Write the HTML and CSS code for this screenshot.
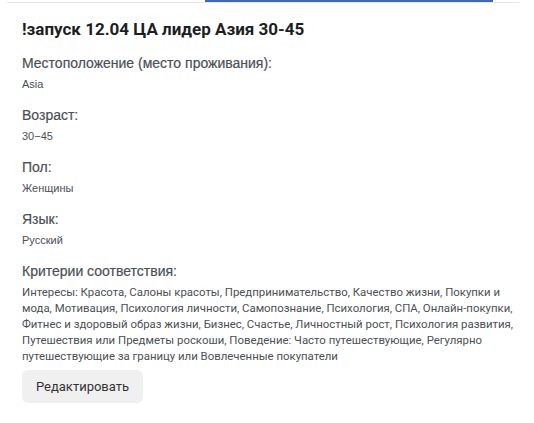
FILE: index.html
```html
<!DOCTYPE html>
<html lang="ru">
<head>
    <meta charset="UTF-8">
    <meta name="viewport" content="width=device-width, initial-scale=1.0">
    <title>Аудитория</title>
    <link rel="stylesheet" href="styles.css">
</head>
<body>
    <div class="card">
        <div class="tabs">
            <div class="tab"></div>
            <div class="tab active"></div>
            <div class="tab rest"></div>
        </div>
        <div class="content">
            <h1 class="title">!запуск 12.04 ЦА лидер Азия 30-45</h1>

            <div class="field">
                <div class="label">Местоположение (место проживания):</div>
                <div class="value">Asia</div>
            </div>
            <div class="field">
                <div class="label">Возраст:</div>
                <div class="value">30−45</div>
            </div>
            <div class="field">
                <div class="label">Пол:</div>
                <div class="value">Женщины</div>
            </div>
            <div class="field">
                <div class="label">Язык:</div>
                <div class="value">Русский</div>
            </div>
            <div class="field last">
                <div class="label">Критерии соответствия:</div>
                <div class="value long">Интересы: Красота, Салоны красоты, Предпринимательство, Качество жизни, Покупки и мода, Мотивация, Психология личности, Самопознание, Психология, СПА, Онлайн-покупки, Фитнес и здоровый образ жизни, Бизнес, Счастье, Личностный рост, Психология развития, Путешествия или Предметы роскоши, Поведение: Часто путешествующие, Регулярно путешествующие за границу или Вовлеченные покупатели</div>
            </div>

            <button class="edit-button">Редактировать</button>
        </div>
    </div>
</body>
</html>
```

FILE: styles.css
```css
body {
    margin: 0;
    background-color: #ffffff;
    font-family: Roboto, "Liberation Sans", Arial, sans-serif;
    color: #444950;
}

.card {
    height: 423px;
    box-sizing: border-box;
}

.tabs {
    display: flex;
    margin: 0 15px 0 7px;
    border-bottom: 1px solid #e6e6e6;
}

.tab {
    height: 2px;
    width: 198px;
}

.tab.active {
    width: 288px;
    background-color: #4267b2;
}

.tab.rest {
    flex: 1;
}

.content {
    padding: 14px 14px 0 22px;
}

.title {
    margin: 0 0 12px 0;
    font-size: 17px;
    font-weight: bold;
    line-height: 24px;
    color: #1c1e21;
}

.field {
    margin-bottom: 13px;
}

.field.last {
    margin-bottom: 6px;
}

.label {
    font-family: "Liberation Sans", Arial, sans-serif;
    font-size: 14px;
    line-height: 20px;
    color: #4b4f56;
    margin-bottom: 3px;
    -webkit-text-stroke: 0.2px #4b4f56;
}

.value {
    font-family: "Liberation Sans", Arial, sans-serif;
    font-size: 11px;
    line-height: 16px;
    color: #4b4f56;
}

.value.long {
    font-family: Roboto, "Liberation Sans", Arial, sans-serif;
    font-size: 11.4px;
}

.edit-button {
    width: 121px;
    height: 33px;
    border: none;
    border-radius: 6px;
    background-color: #f0f0f0;
    font-family: Roboto, "Liberation Sans", Arial, sans-serif;
    font-size: 13px;
    color: #333333;
    cursor: pointer;
}
```
